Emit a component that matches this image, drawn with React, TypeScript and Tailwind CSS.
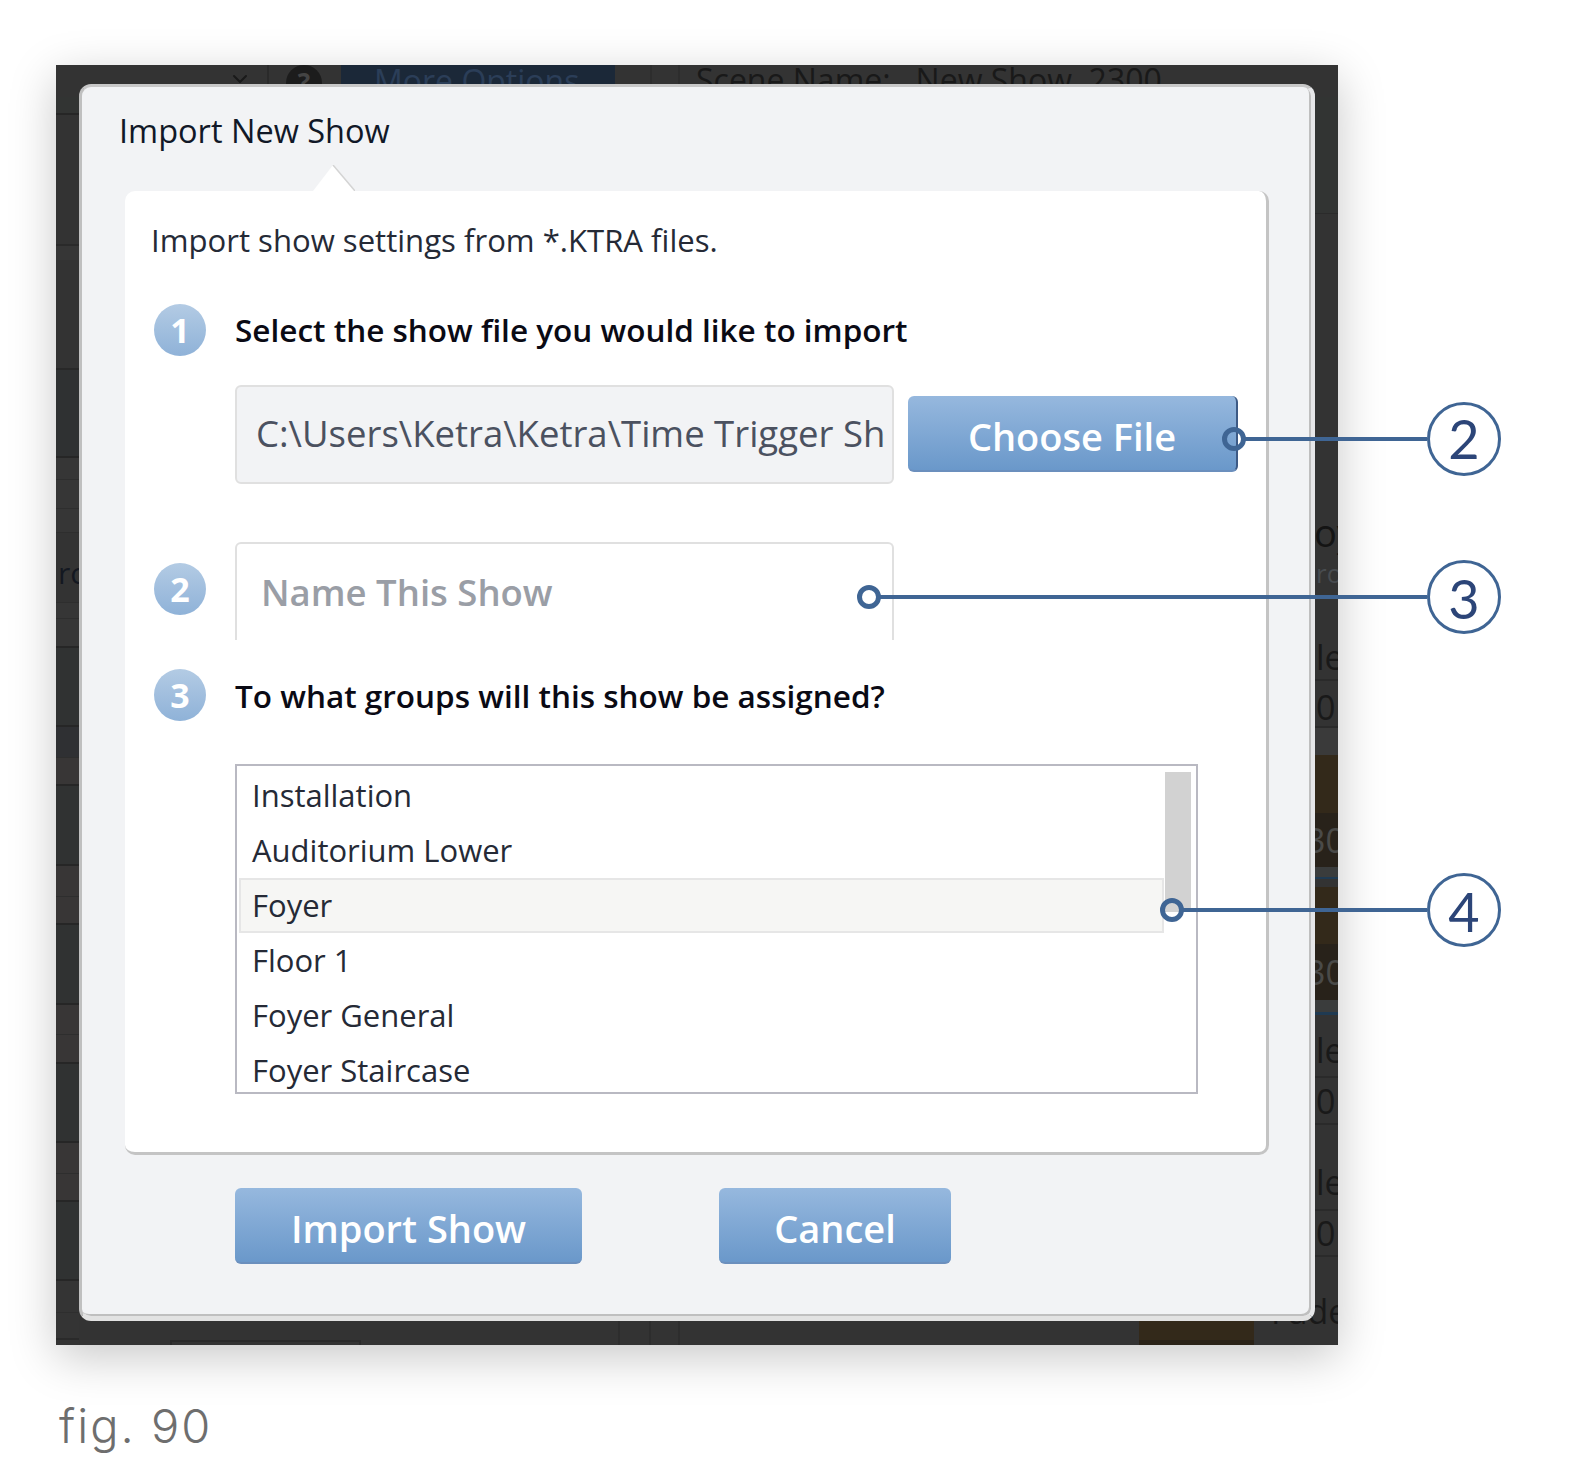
import { ChevronDown } from 'lucide-react';

const uiFont = "font-['Open_Sans','Noto_Sans',sans-serif]";

const groups = ['Installation', 'Auditorium Lower', 'Foyer', 'Floor 1', 'Foyer General', 'Foyer Staircase'];

// table rows of the app behind the dialog, left edge
const leftRows = [
  'h-[18px] bg-[#323433] border-b-2 border-[#262626]',
  'h-[131px] bg-[#333333] border-b-2 border-[#2a2a2a]',
  'h-[14px] bg-[#363636]',
  'h-[110px] bg-[#333333] border-b-2 border-[#282828]',
  'h-[88px] bg-[#2f3132] border-b-2 border-[#262626]',
  'h-[22px] bg-[#363636] border-b border-[#2e2e2e]',
  'h-[29px] bg-[#363636] border-b border-[#2e2e2e]',
  'h-[24px] bg-[#363636] border-b border-[#2e2e2e]',
  'h-[70px] bg-[#333333] border-b border-[#2e2e2e]',
  'h-[16px] bg-[#363636] border-b border-[#2e2e2e]',
  'h-[29px] bg-[#363636] border-b-2 border-[#262626]',
  'h-[79px] bg-[#303232] border-b-2 border-[#262626]',
  'h-[31px] bg-[#2f3033] border-b border-[#2e2e2e]',
  'h-[28px] bg-[#383636] border-b-2 border-[#262626]',
  'h-[80px] bg-[#303232] border-b-2 border-[#262626]',
  'h-[31px] bg-[#383636] border-b border-[#2e2e2e]',
  'h-[28px] bg-[#383636] border-b-2 border-[#262626]',
  'h-[80px] bg-[#303232] border-b-2 border-[#262626]',
  'h-[30px] bg-[#383636] border-b border-[#2e2e2e]',
  'h-[29px] bg-[#383636] border-b-2 border-[#262626]',
  'h-[79px] bg-[#303232] border-b-2 border-[#262626]',
  'h-[31px] bg-[#383636] border-b border-[#2e2e2e]',
  'h-[28px] bg-[#383636] border-b-2 border-[#262626]',
  'h-[79px] bg-[#303232] border-b-2 border-[#262626]',
  'h-[32px] bg-[#343434] border-b border-[#2e2e2e]',
  'h-[27px] bg-[#343434] border-b-2 border-[#2a2a2a]',
  'h-[5px] bg-[#343434]',
];

const StepBadge = ({ n, className = '' }: { n: number; className?: string }) => (
  <div className={`w-[52px] h-[52px] rounded-full shrink-0 flex items-center justify-center bg-gradient-to-b from-[#b3cbe4] to-[#8fb2d8] text-white text-[34px] leading-none font-bold ${className}`}>
    {n}
  </div>
);

const BlueButton = ({ label, className }: { label: string; className: string }) => (
  <button
    className={`h-[76px] pt-[6px] rounded-[6px] bg-gradient-to-b from-[#96b8de] to-[#6a98ca] text-white text-[38px] font-semibold border-b-2 border-[#6b8fbd] ${className}`}
  >
    {label}
  </button>
);

const Callout = ({ n, top, dotLeft }: { n: number; top: number; dotLeft: number }) => (
  <>
    <div
      className="absolute h-[4px] bg-[#3f6594]"
      style={{ top: top - 2, left: dotLeft + 11, width: 1427 - dotLeft - 11 }}
    />
    <div
      className="absolute w-[24px] h-[24px] rounded-full border-[5px] border-[#3f6594]"
      style={{ top: top - 12, left: dotLeft - 12 }}
    />
    <div
      className={`absolute left-[1427px] w-[74px] h-[74px] rounded-full border-[3px] border-[#3f6594] bg-white flex items-center justify-center text-[54px] leading-none text-[#2c4578] font-['Lato',sans-serif] ${n === 2 ? 'pt-0' : 'pt-[4px]'}`}
      style={{ top: top - 37 }}
    >
      {n}
    </div>
  </>
);

const BehindRow = ({ h, text, className = '' }: { h: string; text?: string; className?: string }) => (
  <div className={`${h} flex items-center whitespace-nowrap overflow-hidden leading-none ${className}`}>
    {text}
  </div>
);

const scrap = 'pl-[48px] text-[34px] text-[#191919]';
const lit = 'pl-[38px] text-[34px] text-[#4a4a48]';

export default function App() {
  return (
    <div className={`relative w-[1574px] h-[1482px] bg-white overflow-hidden pt-[65px] pl-[56px] ${uiFont}`}>
      {/* screenshot of the app, dialog lies over it */}
      <div className="relative w-[1282px] h-[1280px] bg-[#333333] overflow-hidden flex flex-col shadow-[0_12px_44px_rgba(0,0,0,0.22)]">
        <div className="h-[32px] shrink-0 flex overflow-hidden">
          <ChevronDown className="ml-[172px] mt-[2px] text-[#1a1a1a]" size={24} />
          <div className="ml-[15px] w-[2px] h-full bg-[#2a2a2a]" />
          <div className="ml-[17px] w-[36px] h-[36px] rounded-full bg-[#1c1c1c] text-center text-[#444444] font-bold text-[26px] leading-[34px]">?</div>
          <div className="ml-[19px] w-[274px] h-full bg-[#1b2838] pl-[33px] text-[#2b3e58] text-[32px] leading-[32px] whitespace-nowrap">More Options</div>
          <div className="ml-[35px] w-[2px] h-full bg-[#2d2d2d]" />
          <div className="ml-[26px] w-[2px] h-full bg-[#2d2d2d]" />
          <div className="ml-[16px] text-[#191919] text-[32px] leading-[30px] whitespace-pre">Scene Name:   New Show  2300</div>
        </div>

        <div className="flex flex-1 min-h-0">
          <div className="w-[23px] shrink-0 flex flex-col">
            {leftRows.map((row, i) => (
              <div key={i} className={`${row} relative`}>
                {i === 8 && <span className="absolute left-[2px] top-[25px] text-[30px] leading-none text-[#141821]">ro</span>}
              </div>
            ))}
          </div>

          <div className="flex-1 flex items-end">
            <div className="flex h-[26px] w-full">
              <div className="ml-[91px] w-[191px] h-[5px] self-end border-t-2 border-x-2 border-[#2a2a2a]" />
              <div className="ml-[257px] w-[2px] bg-[#2d2d2d]" />
              <div className="ml-[29px] w-[2px] bg-[#2d2d2d]" />
              <div className="ml-[27px] w-[2px] bg-[#2d2d2d]" />
              <div className="ml-[459px] w-[115px] bg-[#33291a] border-b-[5px] border-[#2a2217]" />
            </div>
          </div>

          <div className="w-[70px] shrink-0 flex flex-col">
            <BehindRow h="h-[117px]" className="bg-[#323433] border-b border-[#2b2b2b]" />
            <BehindRow h="h-[301px]" />
            <BehindRow h="h-[40px]" text="oy" className="pl-[46px] pb-[6px] text-[38px] text-[#141414]" />
            <BehindRow h="h-[35px]" text="ro" className="pl-[48px] text-[26px] text-[#484c50]" />
            <BehindRow h="h-[50px]" />
            <BehindRow h="h-[41px]" text="le" className={`${scrap} pb-[6px] border-b-2 border-[#2a2a2a]`} />
            <BehindRow h="h-[47px]" text="0" className={`${scrap} pt-[6px] border-b-2 border-[#2a2a2a]`} />
            <BehindRow h="h-[27px]" className="bg-[#3a3a3a]" />
            <BehindRow h="h-[58px]" className="bg-[#33291a]" />
            <BehindRow h="h-[54px]" text="30" className={`${lit} bg-[#28221a]`} />
            <BehindRow h="h-[20px]" className="bg-[#3a3c3c] border-b-[8px] border-b-[#333333] shadow-[inset_0_-2px_0_#1f3a52]" />
            <BehindRow h="h-[57px]" className="bg-[#33291a]" />
            <BehindRow h="h-[56px]" text="30" className={`${lit} bg-[#28221a]`} />
            <BehindRow h="h-[15px]" className="bg-[#3a3c3c] border-b-[3px] border-[#1f3a52]" />
            <BehindRow h="h-[63px]" text="le" className={`${scrap} pt-[8px] border-b-2 border-[#2a2a2a]`} />
            <BehindRow h="h-[47px]" text="0" className={`${scrap} border-b-2 border-[#2a2a2a]`} />
            <BehindRow h="h-[40px]" />
            <BehindRow h="h-[46px]" text="le" className={`${scrap} pb-[10px] border-b-2 border-[#2a2a2a]`} />
            <BehindRow h="h-[46px]" text="0" className={`${scrap} border-b-2 border-[#2a2a2a]`} />
            <BehindRow h="h-[38px]" />
            <BehindRow h="h-[47px]" text="Fade" className="pl-[3px] text-[34px] text-[#191919] items-end pb-[14px]" />
          </div>
        </div>

        {/* dialog */}
        <div className="absolute left-[23px] top-[19px] w-[1236px] h-[1237px] rounded-[12px] bg-[#f2f3f5] border-t-[3px] border-l-[3px] border-r-[4px] border-b-[5px] border-t-[#c8c8c8] border-l-[#c0c0c0] border-r-[#e6e7e9] border-b-[#e2e2e2] shadow-[inset_-2px_-2px_0_#bfbfbf] flex flex-col pt-[22px] pl-[43px]">
          <h1 className="text-[32.5px] leading-[44px] font-medium text-[#111827] ml-[-6px]">Import New Show</h1>
          <div className="relative mt-[38px] w-[1144px] h-[964px] rounded-[10px] bg-white border-r-[3px] border-b-[3px] border-[#c4c4c4] pl-[26px] pr-[30px] pt-[27px]">
            <svg className="absolute left-[188px] -top-[26px]" width="42" height="26" viewBox="0 0 42 26">
              <polygon points="0,26 20,0 42,26" fill="#ffffff" />
              <line x1="20" y1="0" x2="42" y2="26" stroke="#d4d4d4" strokeWidth="1.5" />
            </svg>
            <p className="text-[31.1px] leading-[44px] text-[#252a36]">Import show settings from *.KTRA files.</p>

            <div className="flex items-center mt-[42px] gap-[29px] ml-[3px]">
              <StepBadge n={1} />
              <h2 className="text-[31.5px] font-semibold text-[#0a0a14]">Select the show file you would like to import</h2>
            </div>

            <div className="flex items-center mt-[29px] ml-[84px] gap-[14px]">
              <div className="w-[659px] h-[99px] shrink-0 rounded-[6px] bg-[#f2f3f5] border-2 border-[#e0e0e0] flex items-center pl-[19px] pr-[8px] pb-[3px] text-[36.5px] text-[#4b5160]">
                <span className="overflow-hidden whitespace-nowrap">C:\Users\Ketra\Ketra\Time Trigger Sh</span>
              </div>
              <BlueButton label="Choose File" className="w-[330px] shrink-0 mt-[-1px] border-r-2 border-r-[#3d5a85]" />
            </div>

            <div className="flex items-center mt-[58px] ml-[3px] gap-[29px]">
              <StepBadge n={2} className="mb-[4px]" />
              <div className="w-[659px] h-[98px] shrink-0 rounded-t-[6px] bg-white border-2 border-b-0 border-[#e0e0e0] flex items-center pl-[24px] text-[36.5px] font-semibold text-[#9a9ea6]">
                Name This Show
              </div>
            </div>

            <div className="flex items-center mt-[29px] ml-[3px] gap-[29px]">
              <StepBadge n={3} />
              <h2 className="pt-[2px] text-[31.5px] font-semibold text-[#0a0a14]">To what groups will this show be assigned?</h2>
            </div>

            <div className="relative mt-[43px] ml-[84px] w-[963px] h-[330px] border-2 border-[#b9b9c2] overflow-hidden pt-[2px] pl-[2px]">
              <div className="absolute left-[928px] top-[6px] w-[26px] h-[140px] bg-[#d2d2d2]" />
              {groups.map((g) => (
                <div
                  key={g}
                  className={`w-[925px] h-[55px] flex items-center pl-[11px] text-[31px] text-[#252a36] border-2 ${g === 'Foyer' ? 'bg-[#f6f6f4] border-[#e6e6e6]' : 'border-transparent'}`}
                >
                  {g}
                </div>
              ))}
            </div>
          </div>

          <div className="flex mt-[33px] ml-[110px] gap-[137px]">
            <BlueButton label="Import Show" className="w-[347px]" />
            <BlueButton label="Cancel" className="w-[232px]" />
          </div>
        </div>
      </div>

      <p className="mt-[57px] ml-[3px] text-[47px] leading-none tracking-[2px] font-light text-[#6e6e6e] font-['Inter',sans-serif]">fig. 90</p>

      <Callout n={2} top={439} dotLeft={1234} />
      <Callout n={3} top={597} dotLeft={869} />
      <Callout n={4} top={910} dotLeft={1172} />
    </div>
  );
}
